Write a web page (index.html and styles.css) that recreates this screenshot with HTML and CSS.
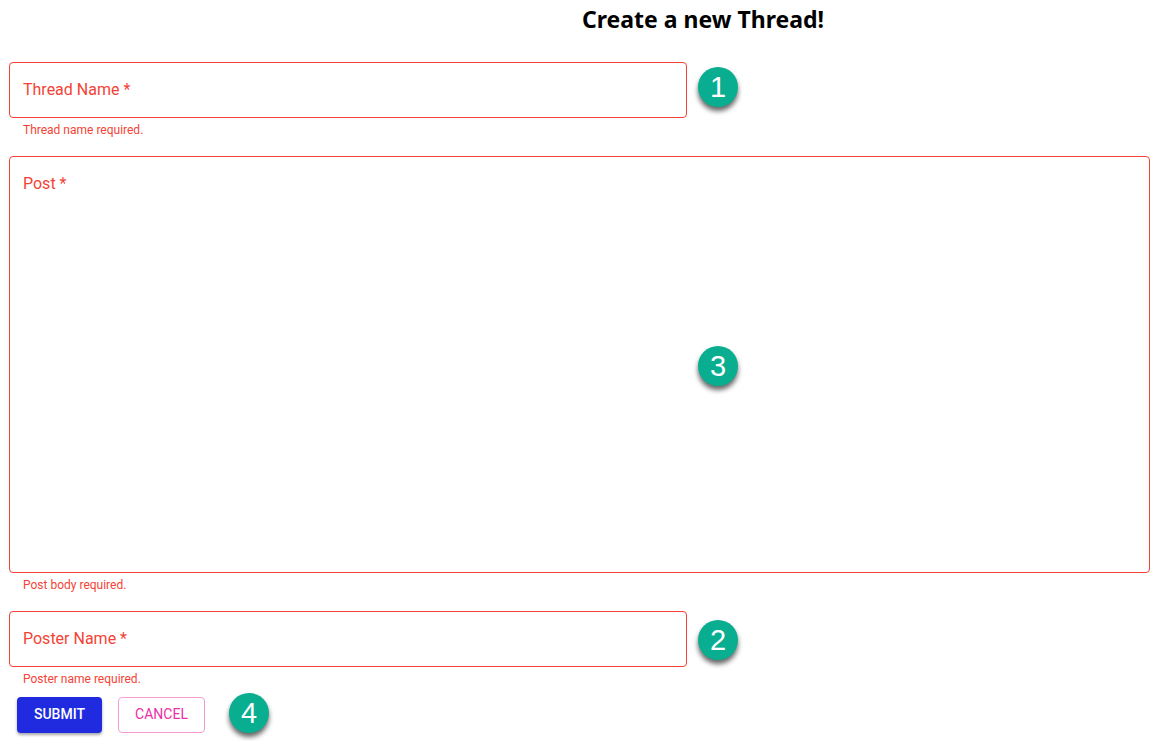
FILE: index.html
```html
<!DOCTYPE html>
<html lang="en">
<head>
  <meta charset="utf-8">
  <meta name="viewport" content="width=device-width, initial-scale=1">
  <title>Create a new Thread!</title>
  <link rel="stylesheet" href="styles.css">
</head>
<body>
  <main class="page">
    <h1 class="title">Create a new Thread!</h1>
    <form class="form" novalidate>
      <div class="row">
        <div class="field">
          <div class="field-box">
            <input class="field-input" id="thread-name" type="text" aria-describedby="thread-help" aria-invalid="true" required>
            <label class="field-label" for="thread-name">Thread Name *</label>
          </div>
          <p class="field-help" id="thread-help">Thread name required.</p>
        </div>
        <span class="pin">1</span>
      </div>
      <div class="field field-post">
        <div class="field-box">
          <textarea class="field-input field-area" id="post" rows="20" aria-describedby="post-help" aria-invalid="true" required></textarea>
          <label class="field-label" for="post">Post *</label>
        </div>
        <p class="field-help" id="post-help">Post body required.</p>
        <span class="pin pin-over">3</span>
      </div>
      <div class="row">
        <div class="field">
          <div class="field-box">
            <input class="field-input" id="poster-name" type="text" aria-describedby="poster-help" aria-invalid="true" required>
            <label class="field-label" for="poster-name">Poster Name *</label>
          </div>
          <p class="field-help" id="poster-help">Poster name required.</p>
        </div>
        <span class="pin pin-low">2</span>
      </div>
      <div class="actions">
        <button class="button button-submit" type="submit">SUBMIT</button>
        <button class="button button-cancel" type="button">CANCEL</button>
        <span class="pin pin-actions">4</span>
      </div>
    </form>
  </main>
</body>
</html>
```
FILE: styles.css
```css
* {
  box-sizing: border-box;
}

body {
  margin: 0;
  background: #fff;
  font-family: Roboto, "Liberation Sans", sans-serif;
}

.page {
  padding: 4px 22px 8px 9px;
}

.title {
  margin: 0 0 28px;
  padding-left: 247px;
  color: #000;
  font: bold 23px/30px "Noto Sans", "Open Sans", sans-serif;
  text-align: center;
}

.form {
  display: flex;
  flex-direction: column;
  gap: 16px;
}

.row {
  display: grid;
  grid-template-columns: minmax(0, 1fr) 452px;
  column-gap: 11px;
  align-items: start;
}

.field {
  position: relative;
}

.field-box {
  display: grid;
}

.field-input,
.field-label {
  grid-area: 1 / 1;
}

.field-input {
  width: 100%;
  height: 56px;
  margin: 0;
  padding: 18px 13px;
  border: 1px solid #f44336;
  border-radius: 4px;
  outline: 0;
  background: #fff;
  color: #222;
  font: 16px/20px Roboto, "Liberation Sans", sans-serif;
}

.field-area {
  height: 417px;
  resize: none;
}

.field-label {
  align-self: start;
  justify-self: start;
  margin: 18px 14px;
  color: #f44336;
  font-size: 16px;
  line-height: 20px;
  pointer-events: none;
}

.field-input:focus + .field-label,
.field-input:valid + .field-label {
  visibility: hidden;
}

.field-help {
  margin: 2px 14px 0;
  color: #f44336;
  font-size: 12px;
  line-height: 20px;
}

.pin {
  display: flex;
  align-items: center;
  justify-content: center;
  width: 40px;
  height: 40px;
  margin-top: 5px;
  border-radius: 50%;
  background: #09ae90;
  box-shadow: 0 4px 5px rgba(0, 0, 0, 0.6);
  color: #fff;
  font: 29px/40px "Liberation Sans", Arial, sans-serif;
}

.pin-low {
  margin-top: 9px;
}

.pin-over {
  position: absolute;
  top: 190px;
  right: 412px;
  margin: 0;
}

.actions {
  display: flex;
  align-items: flex-end;
  gap: 16px;
  margin: -12px 8px 0;
}

.button {
  height: 36px;
  border-radius: 4px;
  font: 500 14px/24px Roboto, "Liberation Sans", sans-serif;
  cursor: pointer;
}

.button-submit {
  min-width: 85px;
  padding: 5px 16px 7px;
  border: 0;
  background: #202be0;
  box-shadow: 0 2px 3px rgba(0, 0, 0, 0.35);
  color: #fff;
}

.button-cancel {
  min-width: 87px;
  padding: 4px 15px 6px;
  border: 1px solid #f59bd3;
  background: #fff;
  color: #ec2fa5;
  font-weight: 400;
}

.pin-actions {
  margin: 0 0 0 8px;
}
```
